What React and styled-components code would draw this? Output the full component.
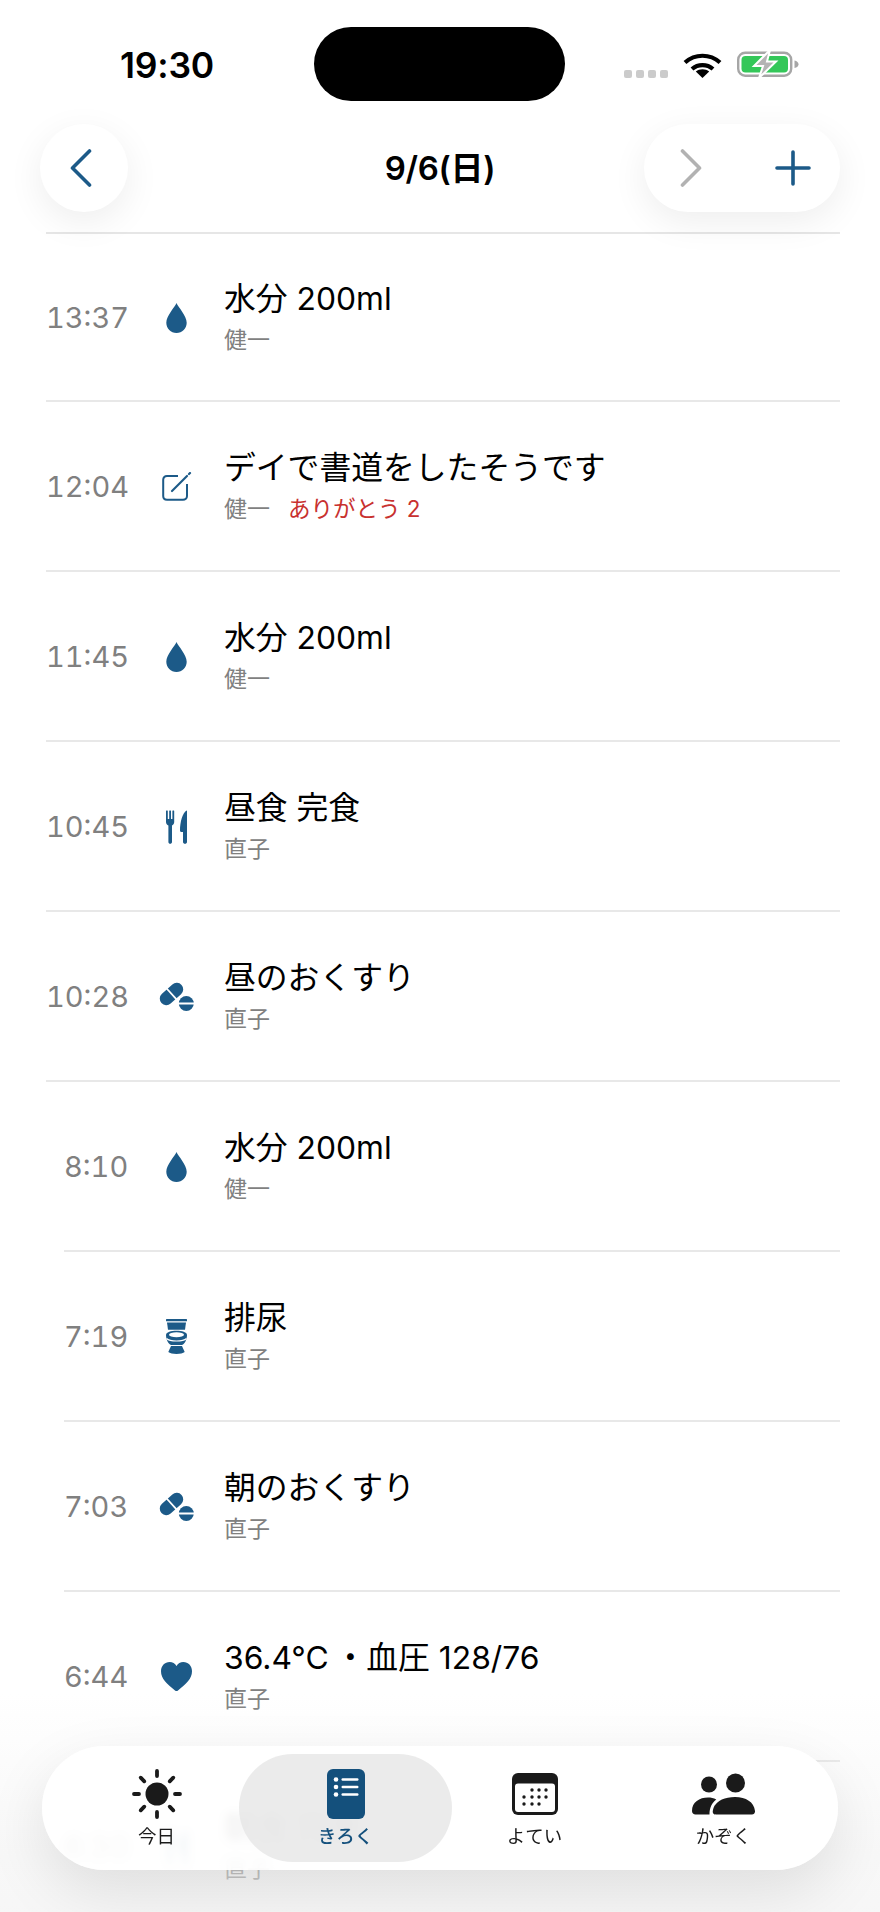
import * as React from 'react';
import styled, { createGlobalStyle } from 'styled-components';

const BLUE = '#1c5a88';
const NAVY = '#14507c';
const INK = '#1a1a1a';
const FONT = 'Inter, "Noto Sans CJK JP", sans-serif';

const GlobalStyle = createGlobalStyle`
    html, body {
        margin: 0;
        padding: 0;
        background: #fff;
    }
    body {
        font-family: ${FONT};
        color: #000;
    }
`;

const Screen = styled.div`
    position: relative;
    width: 880px;
    height: 1912px;
    overflow: hidden;
    background: #fff;
`;

const StatusBar = styled.div`
    height: 124px;
    box-sizing: border-box;
    padding: 27px 81px 0 120px;
    display: flex;
    align-items: flex-start;
`;

const Clock = styled.div`
    width: 194px;
    margin-top: 19px;
    font-size: 35.500px;
    line-height: 40px;
    font-weight: 600;
    letter-spacing: -0.2px;
`;

const Island = styled.div`
    width: 252px;
    height: 74px;
    border-radius: 37px;
    background: #000;
`;

const StatusIcons = styled.div`
    margin-left: 59px;
    margin-top: 23px;
    display: flex;
    align-items: flex-end;
`;

const SignalDots = styled.div`
    display: flex;
    gap: 4px;
    margin-right: 15px;
`;

const SignalDot = styled.span`
    width: 8px;
    height: 8px;
    border-radius: 2px;
    background: #cbcbcb;
`;

const HeaderBar = styled.div`
    height: 108px;
    box-sizing: border-box;
    margin: 0 40px;
    padding-bottom: 20px;
    display: grid;
    grid-template-columns: 196px 1fr 196px;
    align-items: center;
`;

const HeaderRule = styled.div`
    height: 2px;
    margin: 0 40px 0 46px;
    background: #e6e6e6;
`;

const RoundButton = styled.div`
    width: ${props => props.$wide ? '196px' : '88px'};
    height: 88px;
    border-radius: 44px;
    background: #fff;
    box-shadow: 0 10px 36px rgba(0, 0, 0, 0.07);
    display: flex;
    align-items: center;
    justify-content: ${props => props.$wide ? 'space-between' : 'center'};
    padding: ${props => props.$wide ? '0 29px 0 36px' : '0 6px 0 0'};
    box-sizing: border-box;
`;

const HeaderTitle = styled.div`
    text-align: center;
    font-size: 33px;
    line-height: 44px;
    font-weight: 600;
    letter-spacing: -0.3px;
`;

const List = styled.div`
    display: flex;
    flex-direction: column;
`;

const Row = styled.div`
    height: 170px;
    box-sizing: border-box;
    margin-right: 40px;
    margin-left: ${props => props.$short ? '64px' : '46px'};
    border-bottom: 2px solid #e8e8e8;
    display: grid;
    grid-template-columns: ${props => props.$short ? '62px' : '80px'} 98px 1fr;
    align-items: center;
    &:first-child {
        height: 168px;
    }
`;

const Time = styled.div`
    text-align: right;
    white-space: nowrap;
    font-size: 29px;
    line-height: 36px;
    font-variant-numeric: tabular-nums;
    color: #808080;
    margin-top: 1px;
`;

const IconCell = styled.div`
    display: flex;
    justify-content: center;
    align-items: center;
    margin-top: 1px;
    padding-left: 3px;
`;

const Body = styled.div`
    display: flex;
    flex-direction: column;
    gap: 6px;
`;

const Title = styled.div`
    font-size: 31.800px;
    line-height: 40px;
    color: #000;
`;

const Meta = styled.div`
    display: flex;
    gap: 18px;
    font-size: 23px;
    line-height: 30px;
    color: #808080;
`;

const Thanks = styled.span`
    font-size: 22.500px;
    color: #c8312f;
`;

const BottomFade = styled.div`
    position: absolute;
    left: 0;
    right: 0;
    bottom: 0;
    height: 220px;
    background: linear-gradient(to bottom, rgba(255, 255, 255, 0) 0%, rgba(240, 240, 240, 0.45) 70%, rgba(244, 244, 244, 0.75) 100%);
`;

const TabBar = styled.div`
    position: absolute;
    left: 42px;
    top: 1746px;
    width: 796px;
    height: 124px;
    box-sizing: border-box;
    padding: 8px 20px;
    border-radius: 62px;
    background: rgba(255, 255, 255, 0.9);
    backdrop-filter: blur(4px);
    box-shadow: 0 22px 60px rgba(0, 0, 0, 0.1);
    display: grid;
    grid-template-columns: repeat(4, 189px);
`;

const Tab = styled.div`
    height: 108px;
    box-sizing: border-box;
    padding-top: 15px;
    margin: 0 ${props => props.$active ? '-12px' : '0'};
    border-radius: 54px;
    background: ${props => props.$active ? 'rgba(228, 228, 228, 0.75)' : 'transparent'};
    color: ${props => props.$active ? NAVY : INK};
    display: flex;
    flex-direction: column;
    align-items: center;
`;

const TabIcon = styled.div`
    height: 50px;
    display: flex;
    align-items: center;
    justify-content: center;
`;

const TabLabel = styled.div`
    margin-top: 5px;
    font-size: 18.500px;
    line-height: 24px;
    font-weight: ${props => props.$active ? 500 : 400};
`;

const Drop = () => (
    <svg width="21" height="30" viewBox="0 0 21 30">
        <path fill={BLUE} d="M10.5 0C12 4 20.7 12.500 20.700 19.800C20.700 25.600 16.200 30 10.500 30C4.800 30 0.300 25.600 0.300 19.800C0.300 12.500 9 4 10.500 0Z" />
    </svg>
);

const Note = () => (
    <svg width="30" height="29" viewBox="0 0 30 29" fill="none" stroke={BLUE}>
        <path strokeWidth="2" d="M16 4H5C2.800 4 1.200 5.600 1.200 7.800V24C1.200 26.200 2.800 27.800 5 27.800H21C23.200 27.800 25 26.200 25 24V12" />
        <path strokeWidth="2.200" strokeLinecap="round" d="M10 19L25 4" />
        <path strokeWidth="2.200" strokeLinecap="round" d="M27 2L28 1" />
    </svg>
);

const Cutlery = () => (
    <svg width="21" height="34" viewBox="0 0 21 34" fill={BLUE}>
        <path d="M0 1C0 .4 1.800 .4 1.800 1V9H3.200V1C3.200 .4 5 .4 5 1V9H6.400V1C6.400 .4 8.200 .4 8.200 1V12C8.200 14 7 15 6 15.500V32C6 34.400 2.400 34.400 2.400 32V15.500C1.200 15 0 14 0 12Z" />
        <path d="M20.500 .5C20.800 .5 21 .7 21 1V32C21 34.400 17 34.400 17 32V22H15.500C14.500 22 14 21.400 14 20.500C14 12 16.500 3 20.500 .5Z" />
    </svg>
);

const Pills = () => (
    <svg width="35" height="29" viewBox="0 0 35 29" fill={BLUE}>
        <g transform="rotate(-42 12.500 12)">
            <rect x="-1" y="5.500" width="27" height="13" rx="6.500" />
            <rect x="11.700" y="4" width="1.800" height="16" fill="#fff" />
        </g>
        <circle cx="27.300" cy="21.500" r="7.500" />
        <rect x="19" y="20.500" width="16" height="2" fill="#fff" />
    </svg>
);

const Toilet = () => (
    <svg width="21" height="35" viewBox="0 0 21 35" fill={BLUE}>
        <rect x="0" y="0" width="21" height="2.200" rx="0.500" />
        <path d="M1 3.400H20L19 10.800H2Z" />
        <path d="M0 16C0 10.400 21 10.400 21 16C21 20.500 18.500 25.500 16 26H5C2.500 25.500 0 20.500 0 16Z" />
        <ellipse cx="10.500" cy="15.800" rx="7.500" ry="2.500" fill="#fff" />
        <path d="M0.500 19.500C4 22.800 17 22.800 20.500 19.500" fill="none" stroke="#fff" strokeWidth="1.200" />
        <path d="M5 27H16L18.700 33C16 35.600 5 35.600 2.300 33Z" />
    </svg>
);

const Heart = () => (
    <svg width="31" height="29" viewBox="0 0 31 29">
        <path fill={BLUE} d="M15.500 29C15 29 14.500 28.800 14 28.400C6 22.400 0 16.600 0 9.300C0 3.800 3.800 0 8.700 0C11.600 0 14 1.500 15.500 3.900C17 1.500 19.400 0 22.300 0C27.200 0 31 3.800 31 9.300C31 16.600 25 22.400 17 28.400C16.500 28.800 16 29 15.500 29Z" />
    </svg>
);

const Wifi = () => (
    <svg width="39" height="25" viewBox="0 0 39 25" fill="none" stroke="#000" strokeWidth="4.200" style={{ marginRight: 15 }}>
        <path d="M2 9.500C12 .5 27 .5 37 9.500" />
        <path d="M9 16C15 10.800 24 10.800 30 16" />
        <path fill="#000" stroke="none" d="M19.500 25L12.800 18.600C16.600 15.600 22.400 15.600 26.200 18.600Z" />
    </svg>
);

const Battery = () => (
    <svg width="62" height="28" viewBox="0 0 62 28">
        <rect x="1.200" y="2.700" width="53" height="23" rx="7" fill="none" stroke="#a6a6a6" strokeWidth="2.400" />
        <rect x="4.500" y="6" width="46.500" height="16.500" rx="4" fill="#34c759" />
        <path d="M57.500 10.500C60 11 61.500 12.500 61.500 14.200C61.500 16 60 17.500 57.500 18Z" fill="#a6a6a6" />
        <path d="M33 0L17 16H26L22 28L39 11.500H30Z" fill="#b4b4b4" stroke="#fff" strokeWidth="2" />
    </svg>
);

const Chevron = ({ dir, color }) => (
    <svg width="22" height="38" viewBox="0 0 22 38" fill="none" stroke={color} strokeWidth="3.600" strokeLinecap="round" strokeLinejoin="round">
        <path d={dir === 'left' ? 'M19.500 2L2.500 19L19.500 36' : 'M2.500 2L19.500 19L2.500 36'} />
    </svg>
);

const Plus = () => (
    <svg width="36" height="36" viewBox="0 0 36 36" fill="none" stroke={BLUE} strokeWidth="3.600" strokeLinecap="round">
        <path d="M18 2V34M2 18H34" />
    </svg>
);

const Sun = () => (
    <svg width="50" height="50" viewBox="0 0 50 50" fill={INK} stroke={INK} strokeLinecap="round">
        <circle cx="25" cy="25" r="11.500" stroke="none" />
        <g strokeWidth="3.800" fill="none">
            <path d="M25 2V7M25 43V48M2 25H7M43 25H48" />
            <path d="M8.700 8.700L12.300 12.300M37.700 37.700L41.300 41.300M8.700 41.300L12.300 37.700M37.700 12.300L41.300 8.700" />
        </g>
    </svg>
);

const Records = () => (
    <svg width="38" height="50" viewBox="0 0 38 50">
        <rect width="38" height="50" rx="6" fill={NAVY} />
        <g fill="#fff">
            <circle cx="9" cy="10.500" r="2.300" />
            <circle cx="9" cy="18" r="2.300" />
            <circle cx="9" cy="25.500" r="2.300" />
            <rect x="14.500" y="9.300" width="17" height="2.400" rx="1.200" />
            <rect x="14.500" y="16.800" width="17" height="2.400" rx="1.200" />
            <rect x="14.500" y="24.300" width="17" height="2.400" rx="1.200" />
        </g>
    </svg>
);

const Calendar = () => {
    const dots = [
        [18, 17], [25, 17], [32, 17],
        [10, 24], [18, 24], [25, 24], [32, 24],
        [10, 31], [18, 31], [25, 31],
    ];
    return (
        <svg width="46" height="42" viewBox="0 0 46 42">
            <rect width="46" height="42" rx="6" fill={INK} />
            <rect x="3" y="10.500" width="40" height="28.500" rx="3" fill="#fff" />
            {dots.map(([x, y]) => <circle key={`${x}-${y}`} cx={x + 2} cy={y} r="1.700" fill={INK} />)}
        </svg>
    );
};

const People = () => (
    <svg width="63" height="42" viewBox="0 0 63 42" fill={INK}>
        <circle cx="17" cy="11.500" r="8" />
        <circle cx="43.500" cy="10" r="9.500" />
        <path d="M0 38C0 29 7.500 24.500 16 24.500C19 24.500 22 25 24.300 26.500C20 29.500 17.500 34.500 17.500 41.500H3.500C1.500 41.500 0 40 0 38Z" />
        <path d="M24 41.500C21.500 41.500 20.500 40 20.800 38C22 29 31 24 43 24C54 24 62 29 63 38C63.200 40 62 41.500 60 41.500Z" />
    </svg>
);

const entries = [
    { time: '13:37', icon: <Drop />, title: '水分 200ml', who: '健一' },
    { time: '12:04', icon: <Note />, title: 'デイで書道をしたそうです', who: '健一', thanks: 'ありがとう 2' },
    { time: '11:45', icon: <Drop />, title: '水分 200ml', who: '健一' },
    { time: '10:45', icon: <Cutlery />, title: '昼食 完食', who: '直子' },
    { time: '10:28', icon: <Pills />, title: '昼のおくすり', who: '直子' },
    { time: '8:10', icon: <Drop />, title: '水分 200ml', who: '健一' },
    { time: '7:19', icon: <Toilet />, title: '排尿', who: '直子' },
    { time: '7:03', icon: <Pills />, title: '朝のおくすり', who: '直子' },
    { time: '6:44', icon: <Heart />, title: '36.4°C\u2009・血圧 128/76', who: '直子' },
    { time: '6:30', icon: <Cutlery />, title: '朝食 完食', who: '直子' },
];

const tabs = [
    { label: '今日', icon: <Sun /> },
    { label: 'きろく', icon: <Records />, active: true },
    { label: 'よてい', icon: <Calendar /> },
    { label: 'かぞく', icon: <People /> },
];

const App = () => {
    return (
        <Screen>
            <GlobalStyle />
            <StatusBar>
                <Clock>19:30</Clock>
                <Island />
                <StatusIcons>
                    <SignalDots>
                        <SignalDot /><SignalDot /><SignalDot /><SignalDot />
                    </SignalDots>
                    <Wifi />
                    <Battery />
                </StatusIcons>
            </StatusBar>
            <HeaderBar>
                <RoundButton><Chevron dir="left" color={BLUE} /></RoundButton>
                <HeaderTitle>9/6(日)</HeaderTitle>
                <RoundButton $wide>
                    <Chevron dir="right" color="#b2b2b2" />
                    <Plus />
                </RoundButton>
            </HeaderBar>
            <HeaderRule />
            <List>
                {entries.map(entry => (
                    <Row key={entry.time} $short={entry.time.length === 4}>
                        <Time>{entry.time}</Time>
                        <IconCell>{entry.icon}</IconCell>
                        <Body>
                            <Title>{entry.title}</Title>
                            <Meta>
                                <span>{entry.who}</span>
                                {entry.thanks && <Thanks>{entry.thanks}</Thanks>}
                            </Meta>
                        </Body>
                    </Row>
                ))}
            </List>
            <BottomFade />
            <TabBar>
                {tabs.map(tab => (
                    <Tab key={tab.label} $active={tab.active}>
                        <TabIcon>{tab.icon}</TabIcon>
                        <TabLabel $active={tab.active}>{tab.label}</TabLabel>
                    </Tab>
                ))}
            </TabBar>
        </Screen>
    );
};

export default App;
